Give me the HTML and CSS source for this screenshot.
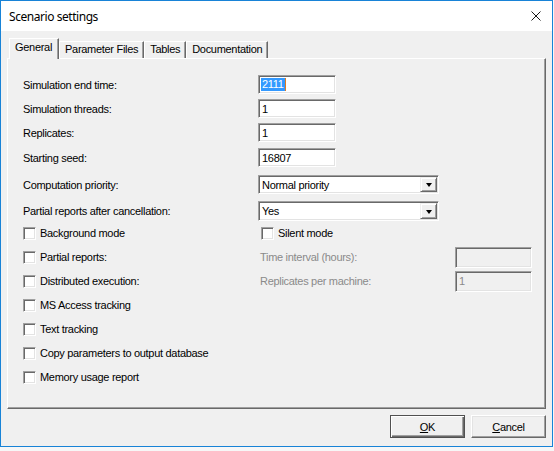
FILE: index.html
```html
<!DOCTYPE html>
<html>
<head>
<meta charset="utf-8">
<title>Scenario settings</title>
<link rel="stylesheet" href="styles.css">
</head>
<body>
<div class="window">
  <div class="titlebar">
    <span class="title">Scenario settings</span>
    <svg class="close" width="10" height="10" viewBox="0 0 10 10"><path d="M0.5 0.5L9.5 9.5M9.5 0.5L0.5 9.5" stroke="#1a1a1a" stroke-width="1" fill="none"/></svg>
  </div>
  <div class="client">
    <div class="tabs">
      <div class="tab active">General</div>
      <div class="tab">Parameter Files</div>
      <div class="tab">Tables</div>
      <div class="tab">Documentation</div>
    </div>
    <div class="panel">
      <div class="form">
        <span class="lbl">Simulation end time:</span>
        <div class="edit"><span class="hl">2111</span><span class="caret"></span></div>
        <span class="lbl">Simulation threads:</span>
        <div class="edit">1</div>
        <span class="lbl">Replicates:</span>
        <div class="edit">1</div>
        <span class="lbl">Starting seed:</span>
        <div class="edit">16807</div>
        <span class="lbl">Computation priority:</span>
        <div class="combo"><span class="val">Normal priority</span><span class="drop"><span class="tri"></span></span></div>
        <span class="lbl">Partial reports after cancellation:</span>
        <div class="combo tall"><span class="val">Yes</span><span class="drop"><span class="tri"></span></span></div>
      </div>
      <div class="checks">
        <label class="cb"><span class="box"></span>Background mode</label>
        <label class="cb shift"><span class="box"></span>Silent mode</label>
        <span></span>

        <label class="cb"><span class="box"></span>Partial reports:</label>
        <span class="dis">Time interval (hours):</span>
        <div class="edit off"></div>

        <label class="cb"><span class="box"></span>Distributed execution:</label>
        <span class="dis">Replicates per machine:</span>
        <div class="edit off">1</div>

        <label class="cb"><span class="box"></span>MS Access tracking</label>
        <span></span><span></span>
        <label class="cb"><span class="box"></span>Text tracking</label>
        <span></span><span></span>
        <label class="cb"><span class="box"></span>Copy parameters to output database</label>
        <span></span><span></span>
        <label class="cb"><span class="box"></span>Memory usage report</label>
        <span></span><span></span>
      </div>
    </div>
    <div class="buttons">
      <div class="btn default"><u>O</u>K</div>
      <div class="btn"><u>C</u>ancel</div>
    </div>
  </div>
</div>
</body>
</html>
```
FILE: styles.css
```css
* { box-sizing: border-box; }
html, body { margin: 0; padding: 0; }
body {
  width: 554px;
  height: 451px;
  background: #f7f7f7;
  font-family: "Liberation Sans", Arial, sans-serif;
  font-size: 11px;
  letter-spacing: -0.3px;
  color: #000;
}
.window {
  width: 553px;
  height: 447px;
  border: 1px solid #1883d7;
  background: #f0f0f0;
  display: flex;
  flex-direction: column;
}
.titlebar {
  flex: none;
  height: 30px;
  background: #fff;
  display: flex;
  align-items: center;
  justify-content: space-between;
  padding: 0 11px 0 8px;
}
.title {
  font-family: "Noto Sans", "Liberation Sans", sans-serif;
  font-size: 12px;
  letter-spacing: -0.45px;
  color: #000;
}
.client {
  flex: 1;
  display: flex;
  flex-direction: column;
  padding: 7px 6px 0 6px;
}
.tabs {
  flex: none;
  height: 20px;
  display: flex;
  align-items: flex-end;
  padding-left: 2px;
}
.tab {
  height: 17px;
  line-height: 15px;
  padding: 0 5px 0 5px;
  border-top: 1px solid #fff;
  border-left: 1px solid #fff;
  border-right: 1px solid #696969;
  box-shadow: inset -1px 0 #a0a0a0;
  white-space: nowrap;
}
.tab.active {
  position: relative;
  z-index: 1;
  height: 21px;
  margin-bottom: -1px;
  line-height: 17px;
  padding: 0 6px 0 5px;
  background: #f0f0f0;
}
.panel {
  flex: none;
  height: 351px;
  border-top: 1px solid #fff;
  border-left: 1px solid #fff;
  border-right: 1px solid #696969;
  border-bottom: 1px solid #696969;
  box-shadow: inset -1px -1px #a0a0a0;
  padding: 16px 0 0 15px;
}
.form {
  display: grid;
  grid-template-columns: 235px auto;
  grid-template-rows: 24px 24px 25px 27px 26px 20px;
  align-items: start;
}
.lbl {
  line-height: 20px;
}
.edit {
  width: 78px;
  height: 19px;
  background: #fff;
  border: 1px solid;
  border-color: #a0a0a0 #fff #fff #a0a0a0;
  box-shadow: inset 1px 1px #696969, inset -1px -1px #e3e3e3;
  padding: 0 2px 0 3px;
  display: flex;
  align-items: center;
  white-space: nowrap;
}
.hl {
  background: #3399ff;
  color: #fff;
  line-height: 13px;
  padding: 0 1px 0 1px;
  margin-left: -1px;
}
.caret {
  width: 1px;
  height: 13px;
  background: #e07a20;
}
.combo {
  width: 181px;
  height: 19px;
  background: #fff;
  border: 1px solid;
  border-color: #a0a0a0 #fff #fff #a0a0a0;
  box-shadow: inset 1px 1px #696969, inset -1px -1px #e3e3e3;
  padding: 1px 1px 1px 3px;
  display: flex;
  align-items: center;
  justify-content: space-between;
}
.combo.tall { height: 20px; }
.drop {
  width: 17px;
  height: 100%;
  background: #f0f0f0;
  border: 1px solid;
  border-color: #f0f0f0 #696969 #696969 #f0f0f0;
  box-shadow: inset 1px 1px #fff, inset -1px -1px #a0a0a0;
  display: flex;
  align-items: center;
  justify-content: center;
}
.tri {
  width: 0;
  height: 0;
  border-left: 3.5px solid transparent;
  border-right: 3.5px solid transparent;
  border-top: 4px solid #000;
  margin-top: 1px;
}
.checks {
  display: grid;
  grid-template-columns: 235px 197px 78px;
  grid-auto-rows: 24px;
  align-items: center;
}
.cb {
  display: flex;
  align-items: center;
  gap: 4px;
  white-space: nowrap;
}
.cb.shift { padding-left: 3px; }
.box {
  flex: none;
  width: 13px;
  height: 13px;
  background: #fff;
  border: 1px solid;
  border-color: #a0a0a0 #fff #fff #a0a0a0;
  box-shadow: inset 1px 1px #696969, inset -1px -1px #e3e3e3;
}
.dis {
  color: #8a8a8a;
  padding-left: 2px;
  white-space: nowrap;
}
.edit.off {
  width: 77px;
  height: 21px;
  background: #f0f0f0;
  color: #8a8a8a;
}
.buttons {
  flex: none;
  display: flex;
  justify-content: flex-end;
  gap: 6px;
  margin-top: 6px;
}
.btn {
  width: 75px;
  height: 23px;
  background: #f0f0f0;
  border: 1px solid;
  border-color: #fff #696969 #696969 #fff;
  box-shadow: inset -1px -1px #a0a0a0, inset 1px 1px #e3e3e3;
  display: flex;
  align-items: center;
  justify-content: center;
}
.btn.default {
  border-color: #505050;
  box-shadow: inset 1px 1px #fff, inset -1px -1px #696969, inset -2px -2px #a0a0a0;
}
.btn u { text-decoration: underline; }
```
